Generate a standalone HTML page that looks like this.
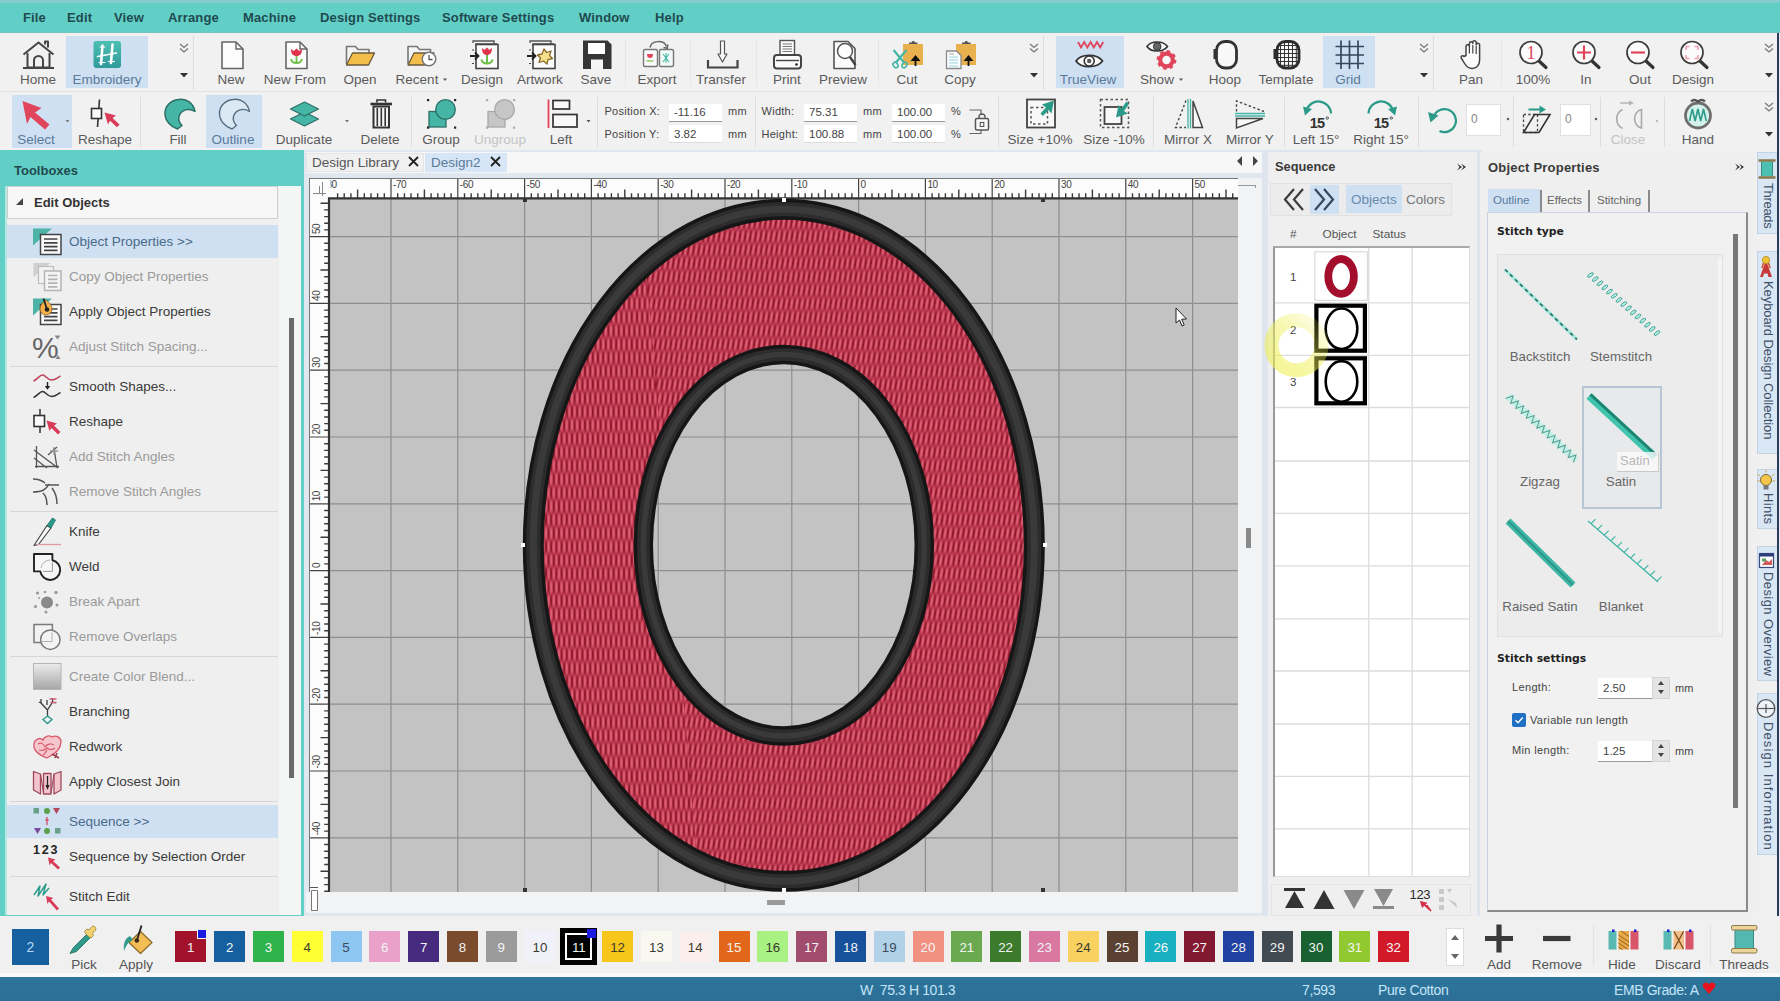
<!DOCTYPE html><html><head><meta charset="utf-8"><title>Embroidery</title><style>
*{box-sizing:border-box;margin:0;padding:0}
html,body{width:1780px;height:1001px;overflow:hidden;background:#f0f0f0;font-family:"Liberation Sans",sans-serif;}
.a{position:absolute}
.t{position:absolute;white-space:nowrap;line-height:1;}
.c{transform:translateX(-50%);}
.lbl{font-size:13.5px;color:#5a5a5a;top:72.8px;}
.lbl2{font-size:13.5px;color:#5a5a5a;top:132.500px;}
.menu{font-size:13px;font-weight:bold;color:#1f4a4f;top:11px;letter-spacing:.15px}
.hl{background:#cfe0f3;}
.sep{position:absolute;width:1px;background:#dcdcdc;}
.fld{position:absolute;background:#fff;border-bottom:1px solid #9a9a9a;font-size:11.5px;color:#444;padding:3.5px 0 0 5px;line-height:1}
.sm{font-size:11px;color:#444;letter-spacing:.28px}
.tb{font-size:13.5px;color:#3a3a3a;}
.tbd{font-size:13.5px;color:#9a9a9a;}
svg{position:absolute;overflow:visible}
</style></head><body>
<div class="a" style="left:0;top:0;width:1780px;height:33px;background:#62cfc6;border-top:3px solid #86cbcd;border-bottom:1.5px solid #74c2ba"></div>
<div class="t menu" style="left:23px">File</div>
<div class="t menu" style="left:67px">Edit</div>
<div class="t menu" style="left:114px">View</div>
<div class="t menu" style="left:168px">Arrange</div>
<div class="t menu" style="left:243px">Machine</div>
<div class="t menu" style="left:320px">Design Settings</div>
<div class="t menu" style="left:442px">Software Settings</div>
<div class="t menu" style="left:579px">Window</div>
<div class="t menu" style="left:655px">Help</div>
<div class="a" style="left:0;top:33px;width:1780px;height:59px;background:#f1f1f1;border-bottom:1px solid #e2e2e2"></div>
<div class="a" style="left:0;top:92px;width:1780px;height:58px;background:#f1f1f1;"></div>
<div class="a hl" style="left:66px;top:36px;width:82px;height:52px"></div>
<div class="a hl" style="left:1056px;top:36px;width:68px;height:52px"></div>
<div class="a hl" style="left:1323px;top:36px;width:52px;height:52px"></div>
<div class="a hl" style="left:12px;top:95px;width:60px;height:53px"></div>
<div class="a hl" style="left:206px;top:95px;width:56px;height:53px"></div>
<div class="sep" style="left:193px;top:36px;height:54px"></div>
<div class="sep" style="left:1043px;top:36px;height:54px"></div>
<div class="sep" style="left:1433px;top:36px;height:54px"></div>
<div class="sep" style="left:140px;top:97px;height:50px"></div>
<div class="sep" style="left:411px;top:97px;height:50px"></div>
<div class="sep" style="left:597px;top:97px;height:50px"></div>
<div class="sep" style="left:755px;top:97px;height:50px"></div>
<div class="sep" style="left:998px;top:97px;height:50px"></div>
<div class="sep" style="left:1153px;top:97px;height:50px"></div>
<div class="sep" style="left:1284px;top:97px;height:50px"></div>
<div class="sep" style="left:1418px;top:97px;height:50px"></div>
<div class="sep" style="left:1513px;top:97px;height:50px"></div>
<div class="sep" style="left:1600px;top:97px;height:50px"></div>
<div class="sep" style="left:1664px;top:97px;height:50px"></div>
<div class="sep" style="left:625px;top:40px;height:46px;background:#e6e6e6"></div>
<div class="sep" style="left:690px;top:40px;height:46px;background:#e6e6e6"></div>
<div class="sep" style="left:756px;top:40px;height:46px;background:#e6e6e6"></div>
<div class="sep" style="left:878px;top:40px;height:46px;background:#e6e6e6"></div>
<div class="sep" style="left:1501px;top:40px;height:46px;background:#e6e6e6"></div>
<div class="t c lbl" style="left:38px">Home</div>
<div class="t c lbl" style="left:107px;color:#5a7a9a">Embroidery</div>
<div class="t c lbl" style="left:231px">New</div>
<div class="t c lbl" style="left:295px">New From</div>
<div class="t c lbl" style="left:360px">Open</div>
<div class="t c lbl" style="left:417px">Recent</div>
<div class="t c lbl" style="left:482px">Design</div>
<div class="t c lbl" style="left:540px">Artwork</div>
<div class="t c lbl" style="left:596px">Save</div>
<div class="t c lbl" style="left:657px">Export</div>
<div class="t c lbl" style="left:721px">Transfer</div>
<div class="t c lbl" style="left:787px">Print</div>
<div class="t c lbl" style="left:843px">Preview</div>
<div class="t c lbl" style="left:907px">Cut</div>
<div class="t c lbl" style="left:960px">Copy</div>
<div class="t c lbl" style="left:1088px;color:#5a7a9a">TrueView</div>
<div class="t c lbl" style="left:1157px">Show</div>
<div class="t c lbl" style="left:1225px">Hoop</div>
<div class="t c lbl" style="left:1286px">Template</div>
<div class="t c lbl" style="left:1348px;color:#5a7a9a">Grid</div>
<div class="t c lbl" style="left:1471px">Pan</div>
<div class="t c lbl" style="left:1533px">100%</div>
<div class="t c lbl" style="left:1586px">In</div>
<div class="t c lbl" style="left:1640px">Out</div>
<div class="t c lbl" style="left:1693px">Design</div>
<div class="t c lbl2" style="left:36px;color:#5a7a9a">Select</div>
<div class="t c lbl2" style="left:105px">Reshape</div>
<div class="t c lbl2" style="left:178px">Fill</div>
<div class="t c lbl2" style="left:233px;color:#5a7a9a">Outline</div>
<div class="t c lbl2" style="left:304px">Duplicate</div>
<div class="t c lbl2" style="left:380px">Delete</div>
<div class="t c lbl2" style="left:441px">Group</div>
<div class="t c lbl2" style="left:500px;color:#c4c4c4">Ungroup</div>
<div class="t c lbl2" style="left:561px">Left</div>
<div class="t c lbl2" style="left:1040px">Size +10%</div>
<div class="t c lbl2" style="left:1114px">Size -10%</div>
<div class="t c lbl2" style="left:1188px">Mirror X</div>
<div class="t c lbl2" style="left:1250px">Mirror Y</div>
<div class="t c lbl2" style="left:1316px">Left 15°</div>
<div class="t c lbl2" style="left:1381px">Right 15°</div>
<div class="t c lbl2" style="left:1628px;color:#c4c4c4">Close</div>
<div class="t c lbl2" style="left:1698px">Hand</div>
<div class="t sm" style="left:604.5px;top:105.5px">Position X:</div>
<div class="t sm" style="left:604.5px;top:128.5px">Position Y:</div>
<div class="fld" style="left:669px;top:103.5px;width:53px;height:18.5px">-11.16</div>
<div class="fld" style="left:669px;top:125px;width:53px;height:17.5px;border-bottom-color:#dcdcdc">3.82</div>
<div class="t sm" style="left:728px;top:106px">mm</div><div class="t sm" style="left:728px;top:129px">mm</div>
<div class="t sm" style="left:761.5px;top:105.5px">Width:</div><div class="t sm" style="left:761.5px;top:128.5px">Height:</div>
<div class="fld" style="left:804px;top:103.5px;width:53px;height:18.5px">75.31</div>
<div class="fld" style="left:804px;top:125px;width:53px;height:17.5px;border-bottom-color:#dcdcdc">100.88</div>
<div class="t sm" style="left:863px;top:106px">mm</div><div class="t sm" style="left:863px;top:129px">mm</div>
<div class="fld" style="left:892px;top:103.5px;width:53px;height:18.5px">100.00</div>
<div class="fld" style="left:892px;top:125px;width:53px;height:17.5px;border-bottom-color:#dcdcdc">100.00</div>
<div class="t sm" style="left:951px;top:106px">%</div><div class="t sm" style="left:951px;top:129px">%</div>
<div class="fld" style="left:1466px;top:104px;width:35px;height:32px;border:1px solid #e0e0e0;color:#888;padding:8px 0 0 4px;font-size:12px">0</div>
<div class="fld" style="left:1560px;top:104px;width:31px;height:32px;border:1px solid #e0e0e0;color:#888;padding:8px 0 0 4px;font-size:12px">0</div>
<svg style="left:0;top:0" width="1780" height="160" viewBox="0 0 1780 160">
<g fill="none" stroke="#444" stroke-width="2" stroke-linejoin="round"><path d="M23.5 54.5L38.5 42.5L53.5 54.5"/><path d="M27.5 53v14.5h22V53"/><path d="M34 67.5v-7a4.5 4.5 0 0 1 9 0v7"/><path d="M45 44.5v-3h3v6"/><path d="M23 68h31"/></g>
<defs><linearGradient id="eg" x1="0" y1="0" x2="0" y2="1"><stop offset="0" stop-color="#4cc0b2"/><stop offset="1" stop-color="#2f9a9c"/></linearGradient></defs>
<rect x="93.5" y="41" width="27.5" height="27" rx="3" fill="url(#eg)"/>
<g stroke="#fff" fill="none" stroke-linecap="round"><path d="M102.5 45.5L101 64" stroke-width="2.6"/><path d="M112.5 44.5L111 63" stroke-width="2.6"/><path d="M97.5 56.5L116.5 53" stroke-width="1.6"/><path d="M99 62.5h6M108.5 61.5h6M100 47h5" stroke-width="1"/></g>
<path d="M180 44l4 3.5 4-3.5 M180 48.5l4 3.5 4-3.5" fill="none" stroke="#777" stroke-width="1.3"/><path d="M180 73h8l-4 4.5z" fill="#333"/>
<path d="M222 42h14l7 7v19.5h-21z" fill="#fcfcfc" stroke="#666" stroke-width="1.6" stroke-linejoin="round"/><path d="M236 42v7h7" fill="none" stroke="#666" stroke-width="1.4"/>
<path d="M286 42h14l7 7v19.5h-21z" fill="#fcfcfc" stroke="#666" stroke-width="1.6" stroke-linejoin="round"/><path d="M300 42v7h7" fill="none" stroke="#666" stroke-width="1.4"/>
<path d="M291 49c0 5 2 7 5.5 7s5.5-2 5.5-7l-2.8 2-2.7-2.5-2.7 2.5z" fill="#e0344e"/><path d="M296.5 56v8M296.5 63c-3 0-5-1.5-5.5-4M296.5 63c3 0 5-1.5 5.5-4" stroke="#6cc04a" stroke-width="1.8" fill="none"/>
<path d="M346.5 64V46.5h9l2.5 3h11V53" fill="#f4f4f4" stroke="#777" stroke-width="1.6" stroke-linejoin="round"/><path d="M346.5 65l6-12h22l-6 12z" fill="#f3bd4c" stroke="#6a5a3a" stroke-width="1.3" stroke-linejoin="round"/>
<path d="M408 64V46.5h9l2.5 3h11V53" fill="#f4f4f4" stroke="#777" stroke-width="1.6" stroke-linejoin="round"/><path d="M408 65l6-12h20l-6 12z" fill="#f3bd4c" stroke="#6a5a3a" stroke-width="1.3" stroke-linejoin="round"/>
<circle cx="429" cy="59" r="6.8" fill="#fff" stroke="#777" stroke-width="1.5"/><path d="M429 55v4.5h3.5" fill="none" stroke="#555" stroke-width="1.3"/>
<path d="M443 78.5h4l-2 2.5z" fill="#555"/>
<path d="M473 43V41h21v3 M476 46V44h21" fill="none" stroke="#555" stroke-width="1.3"/>
<rect x="476" y="44.5" width="22" height="24" fill="#fbfbfb" stroke="#444" stroke-width="1.6"/>
<path d="M470 56h8M475 52.5l3.5 3.5-3.5 3.5" fill="none" stroke="#222" stroke-width="1.8"/><path d="M473 49.5v1M473 63v1" stroke="#333" stroke-width="1.8"/>
<path d="M482 48c0 5 2 7 5 7s5-2 5-7l-2.5 2-2.5-2.5-2.5 2.5z" fill="#e0344e"/><path d="M487 55v9M487 63.5c-3 0-5-1.5-5.5-4M487 63.5c3 0 5-1.5 5.5-4" stroke="#6cc04a" stroke-width="2" fill="none"/>
<path d="M530 43V41h21v3 M533 46V44h21" fill="none" stroke="#555" stroke-width="1.3"/>
<rect x="533" y="44.5" width="22" height="24" fill="#fbfbfb" stroke="#444" stroke-width="1.6"/>
<path d="M527 56h8M532 52.5l3.5 3.5-3.5 3.5" fill="none" stroke="#222" stroke-width="1.8"/><path d="M530 49.5v1M530 63v1" stroke="#333" stroke-width="1.8"/>
<path d="M544 49l2.5 3.5 4.5-1.5-1.5 4.5 3 3-4.5 1.2-1 4.3-3.5-3-4.5 1.5 1.5-4.5-3-3 4.5-1z" fill="#f6e08c" stroke="#8a6a2a" stroke-width="1.3" stroke-linejoin="round"/>
<path d="M583 40.5h24.5l4 4V69H583z" fill="#363636"/><rect x="588" y="43" width="17" height="11" fill="#fff"/><rect x="591" y="59.5" width="12" height="9.5" fill="#f4f4f4"/>
<rect x="643.5" y="49.5" width="14" height="17" rx="1.5" fill="#fafafa" stroke="#777" stroke-width="1.4"/><rect x="659.5" y="49.5" width="14" height="17" rx="1.5" fill="#f2fbf9" stroke="#777" stroke-width="1.4"/>
<path d="M650 47.5a8.5 7 0 0 1 16.5 -1" fill="none" stroke="#666" stroke-width="1.5"/><path d="M663.5 47.5l3.8 0.8 0.5-4" fill="none" stroke="#666" stroke-width="1.5"/>
<path d="M647 54c0 3 1.2 4 3 4s3-1 3-4" fill="#e0455c"/><path d="M646.5 61h7" stroke="#8cc860" stroke-width="1.5"/><path d="M663 54l6 8M669 54l-6 8M666 53v10" stroke="#45b5a6" stroke-width="1.1"/>
<path d="M708 60v7.5h29.5V60" fill="none" stroke="#444" stroke-width="2.2"/><path d="M720.5 41h4v13h2.5l-4.5 8-4.500-8h2.5z" fill="#fafafa" stroke="#555" stroke-width="1.2" stroke-linejoin="round"/>
<rect x="780" y="40.500" width="14.500" height="15" fill="#fafafa" stroke="#555" stroke-width="1.4"/><path d="M782.500 44h9.500M782.500 46.500h9.500M782.500 49h9.500M782.500 51.500h9.500" stroke="#777" stroke-width="1"/>
<rect x="774" y="55" width="27" height="13.500" rx="3" fill="#fafafa" stroke="#444" stroke-width="2"/><path d="M776 60.500h23" stroke="#444" stroke-width="1.4"/><circle cx="796.500" cy="64.500" r="1.300" fill="#222"/>
<path d="M834 41.500h14l7 7V68.500h-21z" fill="#fcfcfc" stroke="#555" stroke-width="1.6" stroke-linejoin="round"/><circle cx="845" cy="51" r="7.500" fill="#fdfdfd" stroke="#555" stroke-width="1.5"/><path d="M850 57l5.500 8" stroke="#444" stroke-width="2.4"/>
<rect x="903" y="44" width="20" height="21" fill="#e9b04e"/><path d="M909 44v-1.500h2.500a1.800 1.800 0 0 1 3.500 0h2.500v1.500z" fill="#555"/>
<path d="M915.5 66v-8M912.5 60l3-3.500 3 3.500z" stroke="#111" stroke-width="1.800" fill="#111"/>
<rect x="956" y="44" width="20" height="21" fill="#e9b04e"/><path d="M962 44v-1.500h2.500a1.800 1.800 0 0 1 3.500 0h2.500v1.500z" fill="#555"/>
<path d="M968.5 66v-8M965.5 60l3-3.500 3 3.500z" stroke="#111" stroke-width="1.800" fill="#111"/>
<path d="M893.500 50l11 13M906.500 50l-11 13" stroke="#45b5a6" stroke-width="2.200" fill="none"/><ellipse cx="895.500" cy="65" rx="2.200" ry="3" fill="none" stroke="#45b5a6" stroke-width="1.600" transform="rotate(-35 895.500 65)"/><ellipse cx="904.500" cy="65" rx="2.200" ry="3" fill="none" stroke="#45b5a6" stroke-width="1.600" transform="rotate(35 904.500 65)"/>
<path d="M946.500 51h10l4.500 4.500V68.500h-14.500z" fill="#fbfdfe" stroke="#8a8a8a" stroke-width="1.300"/><path d="M949 57h9M949 60h9M949 63h9M949 66h9" stroke="#9ad6e0" stroke-width="1.200"/><path d="M949 54h5" stroke="#aaa" stroke-width="1"/>
<path d="M1030 44l4 3.5 4-3.5 M1030 48.5l4 3.5 4-3.5" fill="none" stroke="#777" stroke-width="1.3"/><path d="M1030 73h8l-4 4.5z" fill="#333"/>
<path d="M1078 42l3 5.500 3.200-5.500 3.200 5.500 3.200-5.500 3.200 5.500 3.200-5.500 3.200 5.500 3-5.500" fill="none" stroke="#e0455c" stroke-width="1.800"/>
<path d="M1076 61c5-7.500 21-7.500 26.500 0c-5.500 7.500-21.500 7.500-26.500 0z" fill="#fafafa" stroke="#333" stroke-width="1.800"/><circle cx="1089.200" cy="61" r="5" fill="none" stroke="#333" stroke-width="1.600"/><circle cx="1089.200" cy="61" r="2.200" fill="#555"/>
<path d="M1147 46.500c4-6 16-6 20.500 0c-4.500 6-16.500 6-20.500 0z" fill="#fafafa" stroke="#333" stroke-width="1.600"/><circle cx="1157.200" cy="46.500" r="3.800" fill="#666" stroke="#333" stroke-width="1"/>
<circle cx="1166.500" cy="60" r="6.300" fill="#f6f6f6" stroke="#e0455c" stroke-width="4.200"/><circle cx="1166.500" cy="60" r="8.600" fill="none" stroke="#e0455c" stroke-width="2.600" stroke-dasharray="3.400 3.350"/>
<path d="M1179 78.500h4l-2 2.500z" fill="#555"/>
<rect x="1216.500" y="41.500" width="20" height="26.500" rx="8.500" fill="#f8f8f8" stroke="#333" stroke-width="2.800"/><rect x="1213.500" y="49" width="2.500" height="10" fill="#333"/>
<clipPath id="tc"><rect x="1277" y="41.500" width="22" height="26.500" rx="8.500"/></clipPath>
<rect x="1277" y="41.500" width="22" height="26.500" rx="8.500" fill="#f8f8f8"/><path clip-path="url(#tc)" d="M1280.500 40v30M1284.500 40v30M1288.500 40v30M1292.500 40v30M1296.300 40v30M1276 45.500h24M1276 49.500h24M1276 53.500h24M1276 57.500h24M1276 61.500h24M1276 65.300h24" stroke="#333" stroke-width="1"/>
<rect x="1277" y="41.500" width="22" height="26.500" rx="8.500" fill="none" stroke="#2c2c2c" stroke-width="2.800"/><rect x="1273.500" y="49" width="3" height="10" fill="#2c2c2c"/>
<path d="M1341 40.500v28.500M1349.500 40.500v28.500M1358 40.500v28.500M1335.500 46.500h28.500M1335.500 55h28.500M1335.500 63.500h28.500" stroke="#34495e" stroke-width="1.700" fill="none"/>
<path d="M1420 44l4 3.5 4-3.5 M1420 48.5l4 3.5 4-3.5" fill="none" stroke="#777" stroke-width="1.3"/><path d="M1420 73h8l-4 4.5z" fill="#333"/>
<path d="M1466 55.500v-9a1.700 1.700 0 0 1 3.400 0v-3a1.700 1.700 0 0 1 3.400 0v-1a1.700 1.700 0 0 1 3.400 0v2.500a1.700 1.700 0 0 1 3.400 0V60c0 5-3 8.500-7.500 8.500c-4 0-5.500-1.500-7.500-5l-3.300-5.500c-1-1.800 1.500-3.200 2.700-1.500z" fill="#fcfcfc" stroke="#444" stroke-width="1.500" stroke-linejoin="round"/><path d="M1469.400 46.500v7M1472.800 45v8.500M1476.200 46v8" stroke="#444" stroke-width="1.200"/>
<path d="M1539 61.0L1546 67.5" stroke="#333" stroke-width="3.2" stroke-linecap="round"/><circle cx="1531" cy="52.5" r="11" fill="#fbfbfb" stroke="#3c3c3c" stroke-width="1.7"/><text x="1531" y="59" text-anchor="middle" font-size="18" font-family="Liberation Serif, serif" fill="#e0455c">1</text>
<path d="M1592 61.0L1599 67.5" stroke="#333" stroke-width="3.2" stroke-linecap="round"/><circle cx="1584" cy="52.5" r="11" fill="#fbfbfb" stroke="#3c3c3c" stroke-width="1.7"/><path d="M1577 52.500h14M1584 45.500v14" stroke="#e0455c" stroke-width="2.200"/>
<path d="M1646 61.0L1653 67.5" stroke="#333" stroke-width="3.2" stroke-linecap="round"/><circle cx="1638" cy="52.5" r="11" fill="#fbfbfb" stroke="#3c3c3c" stroke-width="1.7"/><path d="M1631 52.500h14" stroke="#e0455c" stroke-width="2.200"/>
<path d="M1700 61.0L1707 67.5" stroke="#333" stroke-width="3.2" stroke-linecap="round"/><circle cx="1692" cy="52.5" r="11" fill="#fbfbfb" stroke="#3c3c3c" stroke-width="1.7"/><path d="M1686 50v-3.500h3.500M1694.500 46.500h3.500v3.500M1698 55v3.500h-3.500M1689.500 58.500h-3.500v-3.500" stroke="#f0a0ac" stroke-width="1.600" fill="none"/>
<path d="M1765 44l4 3.5 4-3.5 M1765 48.5l4 3.5 4-3.5" fill="none" stroke="#777" stroke-width="1.3"/><path d="M1765 73h8l-4 4.5z" fill="#333"/>
<path d="M22.500 101l19 7-6.500 4.500 14.500 12-4.500 5-14.500-12.500-3.500 7z" fill="#e0455c"/>
<path d="M65.500 120h4l-2 2.500z" fill="#777"/>
<path d="M99.500 99.500L97.500 127" stroke="#333" stroke-width="1.600"/><rect x="91.500" y="108.500" width="10" height="10" fill="#fafafa" stroke="#333" stroke-width="1.600"/>
<path d="M104.500 112.500l11.500 3-3.500 2.500 7 6.500-2.500 2.800-7-6.500-2 3.700z" fill="#d83c58"/>
<path d="M178.5 99.5c8-1.500 15 4 16.500 12c-6-4-14-2-16 5c-0.800 3.500 0.500 6.500 3 9l-4.500 3.500c-6.500-2-12.500-8-12.500-15.500c0-7.500 5.500-13 13.500-14z" fill="#45b5a6" stroke="#2c6f66" stroke-width="1.500" stroke-linejoin="round"/>
<path d="M233 99.5c8-1.500 15 4 16.500 12c-6-4-14-2-16 5c-0.800 3.500 0.500 6.500 3 9l-4.500 3.500c-6.500-2-12.500-8-12.500-15.500c0-7.500 5.500-13 13.500-14z" fill="#dbe9f5" stroke="#566f80" stroke-width="1.400" stroke-linejoin="round"/>
<path d="M304.500 112l14 7-14 7-14-7z" fill="#45b5a6" stroke="#2c6f66" stroke-width="1.200" stroke-linejoin="round"/><path d="M304.500 102l14 7-14 7-14-7z" fill="#45b5a6" stroke="#2c6f66" stroke-width="1.200" stroke-linejoin="round"/>
<path d="M345 120h4l-2 2.500z" fill="#777"/>
<path d="M373.500 106.500h15.500v21h-15.500z" fill="#f4f4f4" stroke="#333" stroke-width="2"/><path d="M377.300 108v18M381.300 108v18M385.200 108v18" stroke="#333" stroke-width="1.600"/><path d="M370.500 104h21.500" stroke="#333" stroke-width="2.600"/><path d="M377 102.500v-2.500h8.500v2.500" fill="none" stroke="#333" stroke-width="1.600"/>
<rect x="429" y="111.500" width="17" height="15.500" fill="#45b5a6" stroke="#2c6f66" stroke-width="1.300"/><circle cx="445.5" cy="109.500" r="9.800" fill="#45b5a6" stroke="#2c6f66" stroke-width="1.300"/>
<rect x="427" y="99" width="2.200" height="2.200" fill="#222"/>
<rect x="454" y="99" width="2.200" height="2.200" fill="#222"/>
<rect x="427" y="126.5" width="2.200" height="2.200" fill="#222"/>
<rect x="454" y="126.5" width="2.200" height="2.200" fill="#222"/>
<rect x="488" y="111.500" width="17" height="15.500" fill="#c6c6c6" stroke="#a8a8a8" stroke-width="1.300"/><circle cx="504.5" cy="109.500" r="9.800" fill="#c6c6c6" stroke="#a8a8a8" stroke-width="1.300"/>
<rect x="486" y="99" width="2.200" height="2.200" fill="#aaa"/>
<rect x="513" y="99" width="2.200" height="2.200" fill="#aaa"/>
<rect x="486" y="126.5" width="2.200" height="2.200" fill="#aaa"/>
<rect x="513" y="126.5" width="2.200" height="2.200" fill="#aaa"/>
<path d="M548.500 99.500v28.500" stroke="#e0455c" stroke-width="1.800"/><rect x="553" y="100.500" width="16.500" height="8.500" fill="#f8f8f8" stroke="#333" stroke-width="1.700"/><rect x="553" y="114.500" width="24" height="12.500" fill="#f8f8f8" stroke="#333" stroke-width="1.700"/>
<path d="M586.500 120h4l-2 2.500z" fill="#555"/>
<path d="M969.500 110h11.500v5M969.500 133.500h11.500v-3" fill="none" stroke="#666" stroke-width="1.200"/><rect x="975.500" y="118.500" width="13" height="11.500" rx="1.500" fill="#fafafa" stroke="#555" stroke-width="1.500"/><path d="M979 118.500v-1.500a3 3 0 0 1 6 0v1.500" fill="none" stroke="#555" stroke-width="1.300"/><rect x="980.200" y="122.500" width="3.600" height="4" fill="none" stroke="#555" stroke-width="1.100"/>
<rect x="1027" y="99.500" width="28" height="28" fill="#f8f8f8" stroke="#444" stroke-width="1.800"/><rect x="1031" y="107.500" width="16.500" height="16.500" fill="none" stroke="#555" stroke-width="1.500" stroke-dasharray="2.500 2.500"/>
<path d="M1054 100.500l-2.500 13-3-3.500-5.500 6-2.500-2.500 5.500-6-4-3z" fill="#2c9a88"/>
<rect x="1100.500" y="99.500" width="28" height="28" fill="none" stroke="#555" stroke-width="1.500" stroke-dasharray="2.500 2.500"/><rect x="1104.500" y="107" width="17" height="17" fill="#f8f8f8" stroke="#444" stroke-width="1.800"/>
<path d="M1116 117.500l2.500-12.500 3 3.500 5-7 2.500 2.500-5 7 4 2.500z" fill="#2c9a88"/>
<path d="M1186 100.500l-10.500 27h10.500" fill="none" stroke="#444" stroke-width="1.400" stroke-dasharray="2.500 2.200"/><path d="M1188 99v29.500M1190.500 99v29.500" stroke="#45b5a6" stroke-width="1.300"/><path d="M1193 101l9.500 26.500h-9.500z" fill="#f8f8f8" stroke="#444" stroke-width="1.500"/>
<path d="M1236.500 111.500v-10.500l27.500 10.500" fill="none" stroke="#444" stroke-width="1.400" stroke-dasharray="2.500 2.200"/><path d="M1235 113.500h30M1235 116h30" stroke="#45b5a6" stroke-width="1.300"/><path d="M1236.500 118.500h26.500l-26.500 9.500z" fill="#f8f8f8" stroke="#444" stroke-width="1.500"/>
<path d="M1331 113.500a12.500 12.500 0 0 0 -24.500 -3" fill="none" stroke="#2c9a88" stroke-width="2.200"/><path d="M1303 106.500l9 2.500-7 6.500z" fill="#2c9a88"/>
<path d="M1368.500 113.500a12.500 12.500 0 0 1 24.500 -3" fill="none" stroke="#2c9a88" stroke-width="2.200"/><path d="M1397 106.500l-9 2.500 7 6.500z" fill="#2c9a88"/>
<text x="1317" y="128" text-anchor="middle" font-size="14.500" font-weight="bold" font-family="Liberation Sans, sans-serif" fill="#333" letter-spacing="-0.800">15</text><circle cx="1327.3" cy="118" r="1.200" fill="none" stroke="#333" stroke-width="0.800"/>
<text x="1381" y="128" text-anchor="middle" font-size="14.500" font-weight="bold" font-family="Liberation Sans, sans-serif" fill="#333" letter-spacing="-0.800">15</text><circle cx="1391.3" cy="118" r="1.200" fill="none" stroke="#333" stroke-width="0.800"/>
<path d="M1433.500 117a11.500 11.500 0 1 1 6 14" fill="none" stroke="#2c9a88" stroke-width="2.200"/><path d="M1428 112l10.500 3.500-8 7z" fill="#2c9a88"/>
<circle cx="1508" cy="119" r="1.300" fill="#666"/><circle cx="1596" cy="119" r="1.300" fill="#666"/>
<path d="M1528.500 109.500h13" stroke="#2c9a88" stroke-width="2"/><path d="M1539.500 105.500l6.500 4-6.500 4z" fill="#2c9a88"/><path d="M1523.500 114.500h14v18h-14z" fill="none" stroke="#444" stroke-width="1.300" stroke-dasharray="2.500 2.200"/><path d="M1534.500 114.500h15.500l-11 18h-15.500z" fill="none" stroke="#333" stroke-width="1.600"/>
<path d="M1622.500 109.500a10 10.500 0 0 0 0 19" fill="none" stroke="#aaa" stroke-width="1.600"/><path d="M1641.500 109.500v18.500a9 9.500 0 0 1 0-18.500z" fill="#f0f0f0" stroke="#aaa" stroke-width="1.600"/><path d="M1620 103h10" stroke="#b4b4b4" stroke-width="1.500"/><path d="M1629 100.500l5 2.500-5 2.500z" fill="#b4b4b4"/><circle cx="1657" cy="121" r="1.200" fill="#bbb"/>
<circle cx="1698" cy="115.500" r="12.500" fill="#d4f2ec" stroke="#6f6f6f" stroke-width="2.800"/><path d="M1689.500 121l2.800-12 2.800 12 2.800-12 2.800 12 2.800-12 2.800 12" fill="none" stroke="#2c9a88" stroke-width="1.600"/><path d="M1691 101.500c2-2 5-1.500 7 0c2-1.500 5-2 7 0" fill="none" stroke="#555" stroke-width="2.200"/>
<path d="M1765 103l4 3.5 4-3.5 M1765 107.5l4 3.5 4-3.5" fill="none" stroke="#777" stroke-width="1.3"/><path d="M1765 132h8l-4 4.5z" fill="#333"/>
</svg>
<div class="a" style="left:0;top:150px;width:304px;height:767.5px;background:#62cfc6"></div>
<div class="t" style="left:14px;top:164px;font-size:13px;font-weight:bold;color:#1f4a4f">Toolboxes</div>
<div class="a" style="left:5px;top:186px;width:296px;height:728.5px;background:#f4f6f6"></div>
<div class="a" style="left:5px;top:186px;width:2px;height:728.5px;background:#b4e8e2"></div>
<div class="a" style="left:7px;top:186px;width:272px;height:728.5px;background:#efefef"></div>
<div class="a" style="left:7px;top:186px;width:271px;height:33px;background:#f7f7f7;border:1px solid #cfcfcf"></div>
<div class="t" style="left:34px;top:196px;font-size:13px;font-weight:bold;color:#333">Edit Objects</div>
<svg style="left:15px;top:197px" width="10" height="10"><path d="M1 8 L8 8 L8 1 Z" fill="#444"/></svg>
<div class="a hl" style="left:7px;top:225px;width:271px;height:33px"></div>
<div class="a hl" style="left:7px;top:805px;width:271px;height:33px"></div>
<div class="t tb" style="left:69px;top:235px;color:#4a6a8a">Object Properties &gt;&gt;</div>
<div class="t tbd" style="left:69px;top:270px">Copy Object Properties</div>
<div class="t tb" style="left:69px;top:305px">Apply Object Properties</div>
<div class="t tbd" style="left:69px;top:340px">Adjust Stitch Spacing...</div>
<div class="t tb" style="left:69px;top:380px">Smooth Shapes...</div>
<div class="t tb" style="left:69px;top:415px">Reshape</div>
<div class="t tbd" style="left:69px;top:450px">Add Stitch Angles</div>
<div class="t tbd" style="left:69px;top:485px">Remove Stitch Angles</div>
<div class="t tb" style="left:69px;top:525px">Knife</div>
<div class="t tb" style="left:69px;top:560px">Weld</div>
<div class="t tbd" style="left:69px;top:595px">Break Apart</div>
<div class="t tbd" style="left:69px;top:630px">Remove Overlaps</div>
<div class="t tbd" style="left:69px;top:670px">Create Color Blend...</div>
<div class="t tb" style="left:69px;top:705px">Branching</div>
<div class="t tb" style="left:69px;top:740px">Redwork</div>
<div class="t tb" style="left:69px;top:775px">Apply Closest Join</div>
<div class="t tb" style="left:69px;top:815px;color:#4a6a8a">Sequence &gt;&gt;</div>
<div class="t tb" style="left:69px;top:850px">Sequence by Selection Order</div>
<div class="t tb" style="left:69px;top:890px">Stitch Edit</div>
<div class="a" style="left:10px;top:366px;width:268px;height:1px;background:#d6d6d6"></div>
<div class="a" style="left:10px;top:511px;width:268px;height:1px;background:#d6d6d6"></div>
<div class="a" style="left:10px;top:656px;width:268px;height:1px;background:#d6d6d6"></div>
<div class="a" style="left:10px;top:801px;width:268px;height:1px;background:#d6d6d6"></div>
<div class="a" style="left:10px;top:876px;width:268px;height:1px;background:#d6d6d6"></div>
<div class="a" style="left:289px;top:318px;width:5px;height:460px;background:#6a6a6a"></div>
<svg style="left:0;top:0" width="320" height="1001" viewBox="0 0 320 1001">
<path d="M33.0 228.5h19l-19 17z" fill="#4db3a6"/><rect x="40.5" y="234.5" width="20.500" height="20" fill="#fafafa" stroke="#444" stroke-width="1.500"/><path d="M44.0 239.0h13.500M44.0 242.8h13.500M44.0 246.6h13.500M44.0 250.4h13.500" stroke="#444" stroke-width="1.700"/>
<path d="M33.500 263h17l-17 14z" fill="#cfcfcf"/><rect x="38.500" y="266.500" width="15" height="17" fill="#f2f2f2" stroke="#bdbdbd" stroke-width="1.200"/>
<rect x="44.5" y="271" width="16.500" height="19.500" fill="#f4f4f4" stroke="#b4b4b4" stroke-width="1.500"/><path d="M48.0 275.5h9.500M48.0 279.3h9.500M48.0 283.1h9.500M48.0 286.9h9.500" stroke="#b4b4b4" stroke-width="1.700"/>
<path d="M33.0 298.5h19l-19 17z" fill="#4db3a6"/><rect x="40.5" y="304.5" width="20.500" height="20" fill="#fafafa" stroke="#444" stroke-width="1.500"/><path d="M44.0 309.0h13.500M44.0 312.8h13.500M44.0 316.6h13.500M44.0 320.4h13.500" stroke="#444" stroke-width="1.700"/>
<path d="M46 300c-4 3-6 6-6 9a6 6 0 0 0 12 0c0-3-2-6-6-9z" fill="#f5b04a" stroke="#8a5a1a" stroke-width="0.800"/><path d="M43.500 298.500l3.500 11" stroke="#222" stroke-width="1.800"/><circle cx="47" cy="309.500" r="2.300" fill="#222"/>
<text x="32" y="358" font-size="30" font-family="Liberation Sans, sans-serif" fill="#666">%</text><path d="M54.500 335.500h6l-3 4z M55.500 359h5l-2.500-4z" fill="#8a8a8a"/><circle cx="55.500" cy="357" r="0" fill="#666"/>
<path d="M33.500 381c4-1.500 6-6 9-6s5 5 9 5s6-2.500 9-4" fill="none" stroke="#c0405a" stroke-width="1.500"/><path d="M33.500 397.500c4-1.500 6-6 9-6s5 5 9 5s6-2.500 9-4" fill="none" stroke="#333" stroke-width="1.500"/><path d="M47.500 382v4" stroke="#222" stroke-width="1.400"/><path d="M44.800 386h5.400l-2.700 3.800z" fill="#222"/>
<path d="M40 409v6M40 427v6" stroke="#333" stroke-width="1.500"/><rect x="34" y="415.500" width="10.500" height="11" fill="#fafafa" stroke="#333" stroke-width="1.600"/><path d="M46.500 420.500l10.500 3-3 2 6.500 6.500-2.500 2.500-6.500-6.500-2 3z" fill="#d83c58"/>
<g stroke="#555" stroke-width="1.300" fill="none"><path d="M36.500 446v22M34 450l24 18M34 458l13 10M35 466.500h24M54 448l3 20M48 455l9-8"/><path d="M50 451h8M54 447v8" stroke="#999"/></g>
<g stroke="#555" stroke-width="1.500" fill="none"><path d="M33 479c5 0 9 1.500 12 4M33 492c9 0 13-2 16-8M45 485h14M43 493c3 3 4 8 4 12M52 488c3 4 5 9 5 16"/></g>
<path d="M34 545.500l13-20 4 2.500-12.500 16.500z" fill="#fafafa" stroke="#444" stroke-width="1.200" stroke-linejoin="round"/><path d="M47 525.500l5.500-7.500 3 2-4.500 8z" fill="#2a9a8a" stroke="#1a6a60" stroke-width="0.800"/><path d="M37 544.500h24" stroke="#e09aa4" stroke-width="1.300"/>
<path d="M34 554H52.400V560.200A10 10 0 1 1 40.300 571.400H34Z" fill="#f6f6f6" stroke="#222" stroke-width="1.900" stroke-linejoin="round"/><path d="M43 571.400h9.400v-9" fill="none" stroke="#999" stroke-width="1"/><path d="M41 568a9.500 9.500 0 0 1 9-8" fill="none" stroke="#aaa" stroke-width="0.900"/>
<circle cx="47" cy="602.500" r="6" fill="#8a8a8a"/><g fill="#9a9a9a"><circle cx="37.500" cy="593" r="1.600"/><circle cx="45" cy="592" r="1.300"/><circle cx="56" cy="592.500" r="1.700"/><circle cx="35.500" cy="606.500" r="1.600"/><circle cx="57" cy="605" r="1.500"/><circle cx="46" cy="612" r="1.500"/><circle cx="39" cy="598" r="1"/></g>
<path d="M34 624.500h18.400v18h-18.400z" fill="#f2f2f2" stroke="#7a7a7a" stroke-width="1.500"/><circle cx="50.300" cy="639.700" r="9.700" fill="#f4f4f4" stroke="#7a7a7a" stroke-width="1.500"/><path d="M41 641.500h11v-9" fill="none" stroke="#aaa" stroke-width="0.900"/>
<defs><linearGradient id="cb" x1="0" y1="0" x2="0" y2="1"><stop offset="0" stop-color="#ececec"/><stop offset="1" stop-color="#a6a6a6"/></linearGradient></defs><rect x="33.500" y="663.500" width="27.500" height="26" fill="url(#cb)" stroke="#b4b4b4" stroke-width="1"/>
<g fill="none" stroke="#3a3a3a" stroke-width="1.300"><path d="M47.500 716v-6M47.500 710l-6.500-7M47.500 710l5-8v-4M41 703v-4M41 703l-2-1M52.500 702l3 1M47 700v5"/></g><path d="M49.500 699h7M50.500 702.500h6" stroke="#d06078" stroke-width="1.300"/><path d="M47.500 716l-4.500 3.500 4.500 4 4.500-4z" fill="none" stroke="#2a9a8a" stroke-width="1.400"/>
<path d="M47 758c-8-3-14-8-13-14c0.500-5 6-7 9-4c1-4 6-5 9-3c4-2 9 0 9 5c0 6-6 12-14 16z" fill="#f6c6cc" stroke="#d85a6c" stroke-width="1.300"/><path d="M38 744c3-2 6 0 7 3c2-3 6-4 9-2M39 750c3 1 6 0 8-2c2 2 6 2 8 0M43 755c2-1 3-3 4-5" fill="none" stroke="#d85a6c" stroke-width="1.100"/><path d="M52 754l7 4M55 758l2-5" stroke="#a03c4c" stroke-width="1.600"/>
<path d="M33.500 771.500l7 2.500v20l-7-4z M61 771.500l-7 2.500v20l7-4z M43.500 773.500h7.500v20.500h-7.500z" fill="#f2c4cc" stroke="#a04a5c" stroke-width="1.300" stroke-linejoin="round"/><path d="M40.500 774l3 19M54 774l-3 19" stroke="#a04a5c" stroke-width="1.200"/><path d="M47.500 776v10" stroke="#222" stroke-width="1.300"/><path d="M45.500 785h4l-2 5z" fill="#222"/>
<rect x="33.500" y="808" width="5.500" height="5.500" fill="#6aa08a"/><circle cx="47" cy="811" r="3" fill="#5aa04a"/><path d="M53 808h7l-3.500 6z" fill="#b04860"/><path d="M47 817v8" stroke="#d83c58" stroke-width="1.200"/><path d="M45.300 820h3.400" stroke="#d83c58" stroke-width="1.200"/><path d="M34 828h7l-3.500 6z" fill="#7a4a9a"/><circle cx="47" cy="831" r="3" fill="#5aa04a"/><rect x="55" y="828" width="5.500" height="5.500" fill="#6aa08a"/>
<text x="33" y="853.500" font-size="12.500" font-weight="bold" font-family="Liberation Sans, sans-serif" fill="#222" letter-spacing="1.800">123</text><path d="M48 857.500l7.500 2-2.500 1.500 7 6.500-2 2-7-6.500-1.500 2.500z" fill="#d83c58"/>
<path d="M34 895l6-9 -2 10 8-12-3 11 6-7" fill="none" stroke="#2a9a8a" stroke-width="1.400" stroke-linejoin="round"/><path d="M46 896l7.500 2-2.500 1.500 8 9-2 2-8-9-1.500 2.500z" fill="#d83c58"/>
</svg>
<div class="a" style="left:304px;top:150px;width:962px;height:767px;background:#e1e7ee"></div>
<div class="a" style="left:306px;top:152px;width:957px;height:21px;background:#f7f7f8"></div>
<div class="a" style="left:306px;top:153px;width:118px;height:19px;background:#f0f0f0;border:1px solid #e4e4e4"></div>
<div class="a" style="left:425px;top:153px;width:82px;height:19px;background:#d6e6f6;"></div>
<div class="t" style="left:312px;top:156px;font-size:13.5px;color:#555">Design Library</div>
<div class="t" style="left:431px;top:156px;font-size:13.5px;color:#5a7a9a">Design2</div>
<svg style="left:408px;top:156px" width="11" height="11"><path d="M1 1L10 10M10 1L1 10" stroke="#222" stroke-width="1.8"/></svg>
<svg style="left:490px;top:156px" width="11" height="11"><path d="M1 1L10 10M10 1L1 10" stroke="#222" stroke-width="1.8"/></svg>
<svg style="left:1234px;top:155px" width="28" height="12"><path d="M8 1L3 6L8 11Z M19 1L24 6L19 11Z" fill="#444"/></svg>
<div class="a" style="left:309px;top:178px;width:950px;height:21px;background:#fcfcfc;border:1px solid #777;border-right:none;border-bottom:none"></div>
<div class="a" style="left:309px;top:198px;width:21px;height:694px;background:#fcfcfc;border-left:1px solid #777"></div>
<div class="a" style="left:330px;top:199px;width:908px;height:693px;background:#c3c3c3"></div>
<div class="a" style="left:1238px;top:178px;width:24px;height:735px;background:#f2f3f5"></div>
<div class="a" style="left:306px;top:892px;width:956px;height:21px;background:#f2f3f5"></div>
<div class="a" style="left:1246px;top:528px;width:5px;height:20px;background:#8a8a8a"></div>
<div class="a" style="left:767px;top:900px;width:18px;height:5px;background:#9a9a9a"></div>
<div class="a" style="left:1238px;top:185px;width:18px;height:3px;border:1px solid #999;border-bottom:none;border-left:none"></div>
<svg style="left:0;top:0" width="1780" height="1001" viewBox="0 0 1780 1001">
<defs>
<pattern id="st" width="5.2" height="27" patternUnits="userSpaceOnUse">
<rect width="5.2" height="27" fill="#b4334a"/>
<ellipse cx="0" cy="6.75" rx="0.85" ry="5.9" fill="#8c1626"/><ellipse cx="5.2" cy="6.75" rx="0.85" ry="5.9" fill="#8c1626"/><ellipse cx="2.6" cy="6.75" rx="1.7" ry="6.9" fill="#c6445b"/><ellipse cx="2.6" cy="6.75" rx="0.85" ry="5.2" fill="#de5f75"/>
<ellipse cx="2.6" cy="20.25" rx="0.85" ry="5.9" fill="#8c1626"/><ellipse cx="0" cy="20.25" rx="1.7" ry="6.9" fill="#c6445b"/><ellipse cx="0" cy="20.25" rx="0.85" ry="5.2" fill="#de5f75"/><ellipse cx="5.2" cy="20.25" rx="1.7" ry="6.9" fill="#c6445b"/><ellipse cx="5.2" cy="20.25" rx="0.85" ry="5.2" fill="#de5f75"/>
</pattern>
<pattern id="st2" patternTransform="skewX(-9)" width="5.2" height="27" patternUnits="userSpaceOnUse">
<rect width="5.2" height="27" fill="#b4334a"/>
<ellipse cx="0" cy="6.75" rx="0.85" ry="5.9" fill="#8c1626"/><ellipse cx="5.2" cy="6.75" rx="0.85" ry="5.9" fill="#8c1626"/><ellipse cx="2.6" cy="6.75" rx="1.7" ry="6.9" fill="#c6445b"/><ellipse cx="2.6" cy="6.75" rx="0.85" ry="5.2" fill="#de5f75"/>
<ellipse cx="2.6" cy="20.25" rx="0.85" ry="5.9" fill="#8c1626"/><ellipse cx="0" cy="20.25" rx="1.7" ry="6.9" fill="#c6445b"/><ellipse cx="0" cy="20.25" rx="0.85" ry="5.2" fill="#de5f75"/><ellipse cx="5.2" cy="20.25" rx="1.7" ry="6.9" fill="#c6445b"/><ellipse cx="5.2" cy="20.25" rx="0.85" ry="5.2" fill="#de5f75"/>
</pattern>
<clipPath id="cl1"><path d="M330 199H640L700 892H330z"/></clipPath><clipPath id="cl2"><path d="M640 199H1238V892H700z"/></clipPath>
<clipPath id="cv"><rect x="330" y="199" width="908" height="693"/></clipPath>
</defs>
<path d="M391.0 199V892 M457.8 199V892 M524.6 199V892 M591.4 199V892 M658.2 199V892 M725.0 199V892 M791.8 199V892 M858.6 199V892 M925.4 199V892 M992.2 199V892 M1059.0 199V892 M1125.8 199V892 M1192.6 199V892 M330 236.6H1238 M330 303.4H1238 M330 370.2H1238 M330 437.0H1238 M330 503.8H1238 M330 570.6H1238 M330 637.4H1238 M330 704.2H1238 M330 771.0H1238 M330 837.8H1238" stroke="#8e8e8e" stroke-width="1.200" fill="none"/>
<path d="M337.6 198v-4.800 M344.2 198v-4.800 M350.9 198v-4.800 M357.6 198v-8.500 M364.3 198v-4.800 M371.0 198v-4.800 M377.6 198v-4.800 M384.3 198v-4.800 M397.7 198v-4.800 M404.4 198v-4.800 M411.0 198v-4.800 M417.7 198v-4.800 M424.4 198v-8.500 M431.1 198v-4.800 M437.8 198v-4.800 M444.4 198v-4.800 M451.1 198v-4.800 M464.5 198v-4.800 M471.2 198v-4.800 M477.8 198v-4.800 M484.5 198v-4.800 M491.2 198v-8.500 M497.9 198v-4.800 M504.6 198v-4.800 M511.2 198v-4.800 M517.9 198v-4.800 M531.3 198v-4.800 M538.0 198v-4.800 M544.6 198v-4.800 M551.3 198v-4.800 M558.0 198v-8.500 M564.7 198v-4.800 M571.4 198v-4.800 M578.0 198v-4.800 M584.7 198v-4.800 M598.1 198v-4.800 M604.8 198v-4.800 M611.4 198v-4.800 M618.1 198v-4.800 M624.8 198v-8.500 M631.5 198v-4.800 M638.2 198v-4.800 M644.8 198v-4.800 M651.5 198v-4.800 M664.9 198v-4.800 M671.6 198v-4.800 M678.2 198v-4.800 M684.9 198v-4.800 M691.6 198v-8.500 M698.3 198v-4.800 M705.0 198v-4.800 M711.6 198v-4.800 M718.3 198v-4.800 M731.7 198v-4.800 M738.4 198v-4.800 M745.0 198v-4.800 M751.7 198v-4.800 M758.4 198v-8.500 M765.1 198v-4.800 M771.8 198v-4.800 M778.4 198v-4.800 M785.1 198v-4.800 M798.5 198v-4.800 M805.2 198v-4.800 M811.8 198v-4.800 M818.5 198v-4.800 M825.2 198v-8.500 M831.9 198v-4.800 M838.6 198v-4.800 M845.2 198v-4.800 M851.9 198v-4.800 M865.3 198v-4.800 M872.0 198v-4.800 M878.6 198v-4.800 M885.3 198v-4.800 M892.0 198v-8.500 M898.7 198v-4.800 M905.4 198v-4.800 M912.0 198v-4.800 M918.7 198v-4.800 M932.1 198v-4.800 M938.8 198v-4.800 M945.4 198v-4.800 M952.1 198v-4.800 M958.8 198v-8.500 M965.5 198v-4.800 M972.2 198v-4.800 M978.8 198v-4.800 M985.5 198v-4.800 M998.9 198v-4.800 M1005.6 198v-4.800 M1012.2 198v-4.800 M1018.9 198v-4.800 M1025.6 198v-8.500 M1032.3 198v-4.800 M1039.0 198v-4.800 M1045.6 198v-4.800 M1052.3 198v-4.800 M1065.7 198v-4.800 M1072.4 198v-4.800 M1079.0 198v-4.800 M1085.7 198v-4.800 M1092.4 198v-8.500 M1099.1 198v-4.800 M1105.8 198v-4.800 M1112.4 198v-4.800 M1119.1 198v-4.800 M1132.5 198v-4.800 M1139.2 198v-4.800 M1145.8 198v-4.800 M1152.5 198v-4.800 M1159.2 198v-8.500 M1165.9 198v-4.800 M1172.6 198v-4.800 M1179.2 198v-4.800 M1185.9 198v-4.800 M1199.3 198v-4.800 M1206.0 198v-4.800 M1212.6 198v-4.800 M1219.3 198v-4.800 M1226.0 198v-8.500 M1232.7 198v-4.800 M329 203.2h-8.500 M329 209.9h-4.800 M329 216.6h-4.800 M329 223.2h-4.800 M329 229.9h-4.800 M329 243.3h-4.800 M329 250.0h-4.800 M329 256.6h-4.800 M329 263.3h-4.800 M329 270.0h-8.500 M329 276.7h-4.800 M329 283.4h-4.800 M329 290.0h-4.800 M329 296.7h-4.800 M329 310.1h-4.800 M329 316.8h-4.800 M329 323.4h-4.800 M329 330.1h-4.800 M329 336.8h-8.500 M329 343.5h-4.800 M329 350.2h-4.800 M329 356.8h-4.800 M329 363.5h-4.800 M329 376.9h-4.800 M329 383.6h-4.800 M329 390.2h-4.800 M329 396.9h-4.800 M329 403.6h-8.500 M329 410.3h-4.800 M329 417.0h-4.800 M329 423.6h-4.800 M329 430.3h-4.800 M329 443.7h-4.800 M329 450.4h-4.800 M329 457.0h-4.800 M329 463.7h-4.800 M329 470.4h-8.500 M329 477.1h-4.800 M329 483.8h-4.800 M329 490.4h-4.800 M329 497.1h-4.800 M329 510.5h-4.800 M329 517.2h-4.800 M329 523.8h-4.800 M329 530.5h-4.800 M329 537.2h-8.500 M329 543.9h-4.800 M329 550.6h-4.800 M329 557.2h-4.800 M329 563.9h-4.800 M329 577.3h-4.800 M329 584.0h-4.800 M329 590.6h-4.800 M329 597.3h-4.800 M329 604.0h-8.500 M329 610.7h-4.800 M329 617.4h-4.800 M329 624.0h-4.800 M329 630.7h-4.800 M329 644.1h-4.800 M329 650.8h-4.800 M329 657.4h-4.800 M329 664.1h-4.800 M329 670.8h-8.500 M329 677.5h-4.800 M329 684.2h-4.800 M329 690.8h-4.800 M329 697.5h-4.800 M329 710.9h-4.800 M329 717.6h-4.800 M329 724.2h-4.800 M329 730.9h-4.800 M329 737.6h-8.500 M329 744.3h-4.800 M329 751.0h-4.800 M329 757.6h-4.800 M329 764.3h-4.800 M329 777.7h-4.800 M329 784.4h-4.800 M329 791.0h-4.800 M329 797.7h-4.800 M329 804.4h-8.500 M329 811.1h-4.800 M329 817.8h-4.800 M329 824.4h-4.800 M329 831.1h-4.800 M329 844.5h-4.800 M329 851.2h-4.800 M329 857.8h-4.800 M329 864.5h-4.800 M329 871.2h-8.500 M329 877.9h-4.800 M329 884.6h-4.800 M329 891.2h-4.800" stroke="#3a3a3a" stroke-width="1.400" fill="none"/>
<path d="M391.0 198V179 M457.8 198V179 M524.6 198V179 M591.4 198V179 M658.2 198V179 M725.0 198V179 M791.8 198V179 M858.6 198V179 M925.4 198V179 M992.2 198V179 M1059.0 198V179 M1125.8 198V179 M1192.6 198V179 M329 236.6H310 M329 303.4H310 M329 370.2H310 M329 437.0H310 M329 503.8H310 M329 570.6H310 M329 637.4H310 M329 704.2H310 M329 771.0H310 M329 837.8H310" stroke="#444" stroke-width="1.200" fill="none"/>
<path d="M329 198.300H1238 M329 197.300V892" stroke="#333" stroke-width="2.200" fill="none"/>
<text x="393.0" y="188" font-size="10" fill="#444" font-family="Liberation Sans, sans-serif" letter-spacing="-0.400">-70</text>
<text x="459.8" y="188" font-size="10" fill="#444" font-family="Liberation Sans, sans-serif" letter-spacing="-0.400">-60</text>
<text x="526.6" y="188" font-size="10" fill="#444" font-family="Liberation Sans, sans-serif" letter-spacing="-0.400">-50</text>
<text x="593.4" y="188" font-size="10" fill="#444" font-family="Liberation Sans, sans-serif" letter-spacing="-0.400">-40</text>
<text x="660.2" y="188" font-size="10" fill="#444" font-family="Liberation Sans, sans-serif" letter-spacing="-0.400">-30</text>
<text x="727.0" y="188" font-size="10" fill="#444" font-family="Liberation Sans, sans-serif" letter-spacing="-0.400">-20</text>
<text x="793.8" y="188" font-size="10" fill="#444" font-family="Liberation Sans, sans-serif" letter-spacing="-0.400">-10</text>
<text x="860.6" y="188" font-size="10" fill="#444" font-family="Liberation Sans, sans-serif" letter-spacing="-0.400">0</text>
<text x="927.4" y="188" font-size="10" fill="#444" font-family="Liberation Sans, sans-serif" letter-spacing="-0.400">10</text>
<text x="994.2" y="188" font-size="10" fill="#444" font-family="Liberation Sans, sans-serif" letter-spacing="-0.400">20</text>
<text x="1061.0" y="188" font-size="10" fill="#444" font-family="Liberation Sans, sans-serif" letter-spacing="-0.400">30</text>
<text x="1127.8" y="188" font-size="10" fill="#444" font-family="Liberation Sans, sans-serif" letter-spacing="-0.400">40</text>
<text x="1194.6" y="188" font-size="10" fill="#444" font-family="Liberation Sans, sans-serif" letter-spacing="-0.400">50</text>
<clipPath id="c80"><rect x="330.500" y="179" width="20" height="12"/></clipPath><text clip-path="url(#c80)" x="323.500" y="188" font-size="10" fill="#444" font-family="Liberation Sans, sans-serif" letter-spacing="-0.400">-80</text>
<text transform="translate(319.500,234.1) rotate(-90)" font-size="10" fill="#444" font-family="Liberation Sans, sans-serif" letter-spacing="-0.400">50</text>
<text transform="translate(319.500,300.9) rotate(-90)" font-size="10" fill="#444" font-family="Liberation Sans, sans-serif" letter-spacing="-0.400">40</text>
<text transform="translate(319.500,367.7) rotate(-90)" font-size="10" fill="#444" font-family="Liberation Sans, sans-serif" letter-spacing="-0.400">30</text>
<text transform="translate(319.500,434.5) rotate(-90)" font-size="10" fill="#444" font-family="Liberation Sans, sans-serif" letter-spacing="-0.400">20</text>
<text transform="translate(319.500,501.3) rotate(-90)" font-size="10" fill="#444" font-family="Liberation Sans, sans-serif" letter-spacing="-0.400">10</text>
<text transform="translate(319.500,568.1) rotate(-90)" font-size="10" fill="#444" font-family="Liberation Sans, sans-serif" letter-spacing="-0.400">0</text>
<text transform="translate(319.500,634.9) rotate(-90)" font-size="10" fill="#444" font-family="Liberation Sans, sans-serif" letter-spacing="-0.400">-10</text>
<text transform="translate(319.500,701.7) rotate(-90)" font-size="10" fill="#444" font-family="Liberation Sans, sans-serif" letter-spacing="-0.400">-20</text>
<text transform="translate(319.500,768.5) rotate(-90)" font-size="10" fill="#444" font-family="Liberation Sans, sans-serif" letter-spacing="-0.400">-30</text>
<text transform="translate(319.500,835.3) rotate(-90)" font-size="10" fill="#444" font-family="Liberation Sans, sans-serif" letter-spacing="-0.400">-40</text>
<path d="M313 193.500h13 M322.500 182v14 M319.500 186v7.500" stroke="#888" stroke-width="1" fill="none"/>
<path d="M311.500 890.500h6v20h-6z" stroke="#777" fill="#fff" stroke-width="1"/><path d="M310 887.500h8" stroke="#555" stroke-width="1"/>
<g clip-path="url(#cv)">
<path fill-rule="evenodd" fill="url(#st)" d="M783.800 209.300a251 336 0 1 0 0.01 0z M783.800 355.300a141 190 0 1 1 -0.01 0z"/>
<g clip-path="url(#cl2)"><path fill-rule="evenodd" fill="url(#st2)" d="M783.800 209.300a251 336 0 1 0 0.01 0z M783.800 355.300a141 190 0 1 1 -0.01 0z"/></g>
<ellipse cx="783.800" cy="545.300" rx="250.5" ry="336" fill="none" stroke="#161616" stroke-width="21"/>
<ellipse cx="783.800" cy="545.300" rx="250.5" ry="336" fill="none" stroke="#2c2c2c" stroke-width="14"/>
<ellipse cx="783.800" cy="545.300" rx="250.5" ry="336" fill="none" stroke="#3a3a3a" stroke-width="7"/>
<ellipse cx="783.800" cy="545.300" rx="140.5" ry="190.75" fill="none" stroke="#161616" stroke-width="19.5"/>
<ellipse cx="783.800" cy="545.300" rx="140.5" ry="190.75" fill="none" stroke="#2c2c2c" stroke-width="12.5"/>
<ellipse cx="783.800" cy="545.300" rx="140.5" ry="190.75" fill="none" stroke="#3a3a3a" stroke-width="5.5"/>
</g>
<rect x="782" y="198" width="4" height="4" fill="#fff"/>
<rect x="521" y="543" width="4" height="4" fill="#fff"/>
<rect x="1043" y="543" width="4" height="4" fill="#fff"/>
<rect x="782" y="888" width="4" height="4" fill="#fff"/>
<rect x="523" y="198" width="4" height="4" fill="#333"/>
<rect x="1041" y="198" width="4" height="4" fill="#333"/>
<rect x="523" y="888" width="4" height="4" fill="#333"/>
<rect x="1041" y="888" width="4" height="4" fill="#333"/>
<path d="M1176 308v15l3.5-3 2.5 6 2.2-1-2.5-5.8 4.8-0.2z" fill="#fff" stroke="#222" stroke-width="1"/>
</svg>
<div class="a" style="left:1262px;top:150px;width:220px;height:770px;background:#dfe5ec"></div>
<div class="a" style="left:1268px;top:152px;width:209px;height:764px;background:#efefef"></div>
<div class="t" style="left:1275px;top:161px;font-size:12.8px;font-weight:bold;color:#3a3a3a">Sequence</div>
<svg style="left:1456px;top:162px" width="11" height="10"><path d="M1 1.5 L6 5 L1 8.5 L3.5 5Z M5 1.5 L10 5 L5 8.5 L7.5 5Z" fill="#333"/></svg>
<div class="a" style="left:1270px;top:183px;width:182px;height:33px;background:#ececec;border:1px solid #e2e2e2"></div>
<div class="a hl" style="left:1310px;top:185px;width:29px;height:29px"></div>
<div class="a hl" style="left:1346px;top:185px;width:56px;height:28px"></div>
<svg style="left:1282px;top:187px" width="60" height="26"><path d="M12 2 L3 12.5 L12 23 M21 2 L12 12.5 L21 23" fill="none" stroke="#3c3c3c" stroke-width="2.2"/><path d="M33 2 L42 12.5 L33 23 M42 2 L51 12.5 L42 23" fill="none" stroke="#34495e" stroke-width="2.2"/></svg>
<div class="t" style="left:1351px;top:193px;font-size:13.5px;color:#6a8aab">Objects</div>
<div class="t" style="left:1406px;top:193px;font-size:13.5px;color:#777">Colors</div>
<div class="t" style="left:1290px;top:228.5px;font-size:11.8px;color:#555">#</div>
<div class="t" style="left:1322.5px;top:228.5px;font-size:11.8px;color:#555">Object</div>
<div class="t" style="left:1372.5px;top:228.5px;font-size:11.8px;color:#555">Status</div>
<div class="a" style="left:1273px;top:246px;width:197px;height:631px;background:#fff;border-top:2px solid #aaa;border-left:2px solid #999;border-right:1px solid #ddd;border-bottom:1px solid #ddd"></div>
<div class="a" style="left:1271px;top:884px;width:200px;height:32px;border:1px solid #e4e4e4"></div>
<svg style="left:0;top:0" width="1780" height="1001" viewBox="0 0 1780 1001">
<path d="M1275 302.8H1469 M1275 355.3H1469 M1275 407.5H1469 M1275 461H1469 M1275 513.4H1469 M1275 565.8H1469 M1275 618.8H1469 M1275 671H1469 M1275 724H1469 M1275 776.4H1469 M1275 828.9H1469 M1368.8 248V876 M1412.2 248V876" stroke="#dcdcdc" stroke-width="1.3" fill="none"/>
<text x="1290" y="281" font-size="11.5" fill="#444" font-family="Liberation Sans, sans-serif">1</text>
<text x="1290" y="334" font-size="11.5" fill="#444" font-family="Liberation Sans, sans-serif">2</text>
<text x="1290" y="386" font-size="11.5" fill="#444" font-family="Liberation Sans, sans-serif">3</text>
<rect x="1314.800" y="251.800" width="52.500" height="48.500" fill="#fff" stroke="#d4d4d4" stroke-width="1"/>
<ellipse cx="1341.100" cy="276.400" rx="12.800" ry="17.400" fill="none" stroke="#a20e2c" stroke-width="7.800"/>
<clipPath id="tb0"><rect x="1316" y="305.6" width="49" height="45.500"/></clipPath>
<rect x="1316.400" y="305.70000000000005" width="48.500" height="45" fill="#fff" stroke="#000" stroke-width="4.200"/>
<ellipse clip-path="url(#tb0)" cx="1341.500" cy="328.8" rx="15.800" ry="20.300" fill="#fff" stroke="#000" stroke-width="2.600"/>
<clipPath id="tb1"><rect x="1316" y="358.2" width="49" height="45.500"/></clipPath>
<rect x="1316.400" y="358.3" width="48.500" height="45" fill="#fff" stroke="#000" stroke-width="4.200"/>
<ellipse clip-path="url(#tb1)" cx="1341.500" cy="381.4" rx="15.800" ry="20.300" fill="#fff" stroke="#000" stroke-width="2.600"/>
<defs><linearGradient id="yg" x1="0" y1="1" x2="1" y2="0"><stop offset="0" stop-color="#eef04e" stop-opacity="0.62"/><stop offset="0.55" stop-color="#eef04e" stop-opacity="0.45"/><stop offset="1" stop-color="#eef04e" stop-opacity="0.12"/></linearGradient></defs>
<circle cx="1296.500" cy="345.200" r="25" fill="none" stroke="url(#yg)" stroke-width="14"/>
<g fill="#333"><path d="M1284 888h21v3h-21z M1294.5 891 L1304 908 H1285Z"/><path d="M1324 890 L1334.5 909 H1313.5Z"/></g>
<g fill="#8a8a8a"><path d="M1354 909 L1343.5 890 H1364.5Z"/><path d="M1373 906h21v3h-21z M1383.5 906 L1374 889 H1393Z"/></g>
<text x="1409.500" y="899.300" font-size="13" fill="#2a2a2a" font-family="Liberation Sans, sans-serif" letter-spacing="-0.300">123</text>
<path d="M1421 902 L1431 911 L1427 905.5Z M1421 902l5 1.2-3.6 3.4z" fill="#d6314a" stroke="#d6314a" stroke-width="1.5"/>
<g fill="#c9c9c9"><rect x="1439" y="889" width="5" height="5"/><rect x="1439" y="897" width="5" height="5"/><rect x="1439" y="905" width="5" height="5"/><path d="M1447 889l5 0-2.5 4z M1448 899 l9 9 -1 -5z"/></g>
</svg>
<div class="a" style="left:1480px;top:152px;width:274px;height:764px;background:#efefef"></div>
<div class="t" style="left:1488px;top:161px;font-size:13px;letter-spacing:.2px;font-weight:bold;color:#3a3a3a">Object Properties</div>
<svg style="left:1734px;top:162px" width="11" height="10"><path d="M1 1.5 L6 5 L1 8.5 L3.5 5Z M5 1.5 L10 5 L5 8.5 L7.5 5Z" fill="#333"/></svg>
<div class="a" style="left:1488px;top:189px;width:52px;height:24px;background:#cfe0f3"></div>
<div class="t" style="left:1493px;top:195px;font-size:11.5px;color:#5a7a9a">Outline</div>
<div class="t" style="left:1547px;top:195px;font-size:11.5px;color:#666">Effects</div>
<div class="t" style="left:1597px;top:195px;font-size:11.5px;color:#666">Stitching</div>
<div class="a" style="left:1540px;top:190px;width:1.5px;height:22px;background:#8a8a8a"></div>
<div class="a" style="left:1588px;top:190px;width:1.5px;height:22px;background:#8a8a8a"></div>
<div class="a" style="left:1648px;top:190px;width:1.5px;height:22px;background:#8a8a8a"></div>
<div class="a" style="left:1487px;top:212px;width:261px;height:700px;background:#f1f1f1;border:1px solid #c9d3de;border-right:2px solid #8a8a8a;border-bottom:2px solid #8a8a8a"></div>
<div class="t" style="left:1497px;top:227px;font-size:10.8px;font-weight:bold;color:#222;font-family:'DejaVu Sans',sans-serif">Stitch type</div>
<div class="a" style="left:1733px;top:234px;width:5px;height:574px;background:#777"></div>
<div class="a" style="left:1497px;top:254px;width:226px;height:383px;background:#ececec;border:1px solid #e0e0e0"></div>
<div class="a" style="left:1718px;top:258px;width:4px;height:375px;background:#f4f4f4"></div>
<div class="a" style="left:1582px;top:386px;width:80px;height:123px;background:#e8e9ea;border:2.5px solid #b8c6d4"></div>
<div class="t c" style="left:1540px;top:350px;font-size:13.3px;color:#666">Backstitch</div>
<div class="t c" style="left:1621px;top:350px;font-size:13.3px;color:#666">Stemstitch</div>
<div class="t c" style="left:1540px;top:475px;font-size:13.3px;color:#666">Zigzag</div>
<div class="t c" style="left:1621px;top:475px;font-size:13.3px;color:#666">Satin</div>
<div class="t c" style="left:1540px;top:600px;font-size:13.3px;color:#666">Raised Satin</div>
<div class="t c" style="left:1621px;top:600px;font-size:13.3px;color:#666">Blanket</div>
<div class="a" style="left:1617px;top:451.5px;width:42px;height:20.500px;background:rgba(250,250,250,.8);border-bottom:1px solid #c8c8c8;border-right:1px solid #d0d0d0;z-index:3"></div>
<div class="t" style="left:1620px;top:453.500px;font-size:13px;color:#b8b8b8;z-index:4">Satin</div>
<div class="t" style="left:1497px;top:654px;font-size:10.8px;font-weight:bold;color:#222;font-family:'DejaVu Sans',sans-serif">Stitch settings</div>
<div class="t" style="left:1512px;top:682px;font-size:11px;letter-spacing:.35px;color:#444">Length:</div>
<div class="t" style="left:1512px;top:745px;font-size:11px;letter-spacing:.35px;color:#444">Min length:</div>
<div class="t" style="left:1530px;top:715px;font-size:11px;letter-spacing:.35px;color:#444">Variable run length</div>
<div class="fld" style="left:1598px;top:678px;width:54px;height:21px;padding:5px 0 0 5px">2.50</div>
<div class="a" style="left:1652px;top:677px;width:18px;height:22px;background:#e4e4e4;border:1px solid #d4d4d4"></div>
<svg style="left:1657px;top:680px" width="8" height="16"><path d="M1 5L4 1L7 5Z M1 10L4 14L7 10Z" fill="#444"/></svg>
<div class="t" style="left:1675px;top:683px;font-size:11px;color:#444">mm</div>
<div class="fld" style="left:1598px;top:741px;width:54px;height:21px;padding:5px 0 0 5px">1.25</div>
<div class="a" style="left:1652px;top:740px;width:18px;height:22px;background:#e4e4e4;border:1px solid #d4d4d4"></div>
<svg style="left:1657px;top:743px" width="8" height="16"><path d="M1 5L4 1L7 5Z M1 10L4 14L7 10Z" fill="#444"/></svg>
<div class="t" style="left:1675px;top:746px;font-size:11px;color:#444">mm</div>
<div class="a" style="left:1512px;top:713px;width:14px;height:14px;background:#1f6fc4;border-radius:2px"></div>
<svg style="left:1512px;top:713px" width="14" height="14"><path d="M3.5 7.2L6 9.7L10.8 4.5" fill="none" stroke="#fff" stroke-width="1.4"/></svg>
<svg style="left:0;top:0" width="1780" height="1001" viewBox="0 0 1780 1001">
<path d="M1505 269.500L1577 339.500" stroke="#a4e8dc" stroke-width="3.200"/><path d="M1505 269.500L1577 339.500" stroke="#2d7268" stroke-width="1.700" stroke-dasharray="3.600 3.400"/>
<ellipse cx="1590.5" cy="275.0" rx="3.400" ry="1.400" transform="rotate(-35 1590.5 275.0)" fill="#b4efe4" stroke="#3fa394" stroke-width="0.900"/>
<ellipse cx="1595.2" cy="279.1" rx="3.400" ry="1.400" transform="rotate(-35 1595.2 279.1)" fill="#b4efe4" stroke="#3fa394" stroke-width="0.900"/>
<ellipse cx="1600.0" cy="283.3" rx="3.400" ry="1.400" transform="rotate(-35 1600.0 283.3)" fill="#b4efe4" stroke="#3fa394" stroke-width="0.900"/>
<ellipse cx="1604.8" cy="287.4" rx="3.400" ry="1.400" transform="rotate(-35 1604.8 287.4)" fill="#b4efe4" stroke="#3fa394" stroke-width="0.900"/>
<ellipse cx="1609.5" cy="291.6" rx="3.400" ry="1.400" transform="rotate(-35 1609.5 291.6)" fill="#b4efe4" stroke="#3fa394" stroke-width="0.900"/>
<ellipse cx="1614.2" cy="295.8" rx="3.400" ry="1.400" transform="rotate(-35 1614.2 295.8)" fill="#b4efe4" stroke="#3fa394" stroke-width="0.900"/>
<ellipse cx="1619.0" cy="299.9" rx="3.400" ry="1.400" transform="rotate(-35 1619.0 299.9)" fill="#b4efe4" stroke="#3fa394" stroke-width="0.900"/>
<ellipse cx="1623.8" cy="304.1" rx="3.400" ry="1.400" transform="rotate(-35 1623.8 304.1)" fill="#b4efe4" stroke="#3fa394" stroke-width="0.900"/>
<ellipse cx="1628.5" cy="308.2" rx="3.400" ry="1.400" transform="rotate(-35 1628.5 308.2)" fill="#b4efe4" stroke="#3fa394" stroke-width="0.900"/>
<ellipse cx="1633.2" cy="312.4" rx="3.400" ry="1.400" transform="rotate(-35 1633.2 312.4)" fill="#b4efe4" stroke="#3fa394" stroke-width="0.900"/>
<ellipse cx="1638.0" cy="316.5" rx="3.400" ry="1.400" transform="rotate(-35 1638.0 316.5)" fill="#b4efe4" stroke="#3fa394" stroke-width="0.900"/>
<ellipse cx="1642.8" cy="320.6" rx="3.400" ry="1.400" transform="rotate(-35 1642.8 320.6)" fill="#b4efe4" stroke="#3fa394" stroke-width="0.900"/>
<ellipse cx="1647.5" cy="324.8" rx="3.400" ry="1.400" transform="rotate(-35 1647.5 324.8)" fill="#b4efe4" stroke="#3fa394" stroke-width="0.900"/>
<ellipse cx="1652.2" cy="328.9" rx="3.400" ry="1.400" transform="rotate(-35 1652.2 328.9)" fill="#b4efe4" stroke="#3fa394" stroke-width="0.900"/>
<ellipse cx="1657.0" cy="333.1" rx="3.400" ry="1.400" transform="rotate(-35 1657.0 333.1)" fill="#b4efe4" stroke="#3fa394" stroke-width="0.900"/>
<path d="M1508 396L1576 460" stroke="#c4f0e8" stroke-width="7"/><path d="M1505.5 398.5 L1513.1 395.9 L1510.7 403.4 L1518.4 400.9 L1515.9 408.4 L1523.6 405.8 L1521.2 413.3 L1528.8 410.7 L1526.4 418.2 L1534.1 415.6 L1531.6 423.1 L1539.3 420.6 L1536.9 428.1 L1544.5 425.5 L1542.1 433.0 L1549.8 430.4 L1547.3 437.9 L1555.0 435.3 L1552.6 442.8 L1560.2 440.2 L1557.8 447.8 L1565.4 445.2 L1563.0 452.7 L1570.7 450.1 L1568.2 457.6 L1575.9 455.0 L1573.5 462.5" stroke="#5aa294" stroke-width="1.100" fill="none"/>
<path d="M1589 396L1655 457" stroke="#3fc4ae" stroke-width="7.500"/><path d="M1590.500 394.500L1656.500 455.500" stroke="#1f8372" stroke-width="3"/>
<path d="M1508 521L1573 585" stroke="#3db5a4" stroke-width="7"/><path d="M1508 521L1573 585" stroke="#2a9080" stroke-width="1.6"/>
<path d="M1588 521L1658 582 M1591.0 523.6l4.5 -4.5 M1597.6 529.4l4.5 -4.5 M1604.2 535.1l4.5 -4.5 M1610.8 540.9l4.5 -4.5 M1617.4 546.6l4.5 -4.5 M1624.0 552.4l4.5 -4.5 M1630.6 558.1l4.5 -4.5 M1637.2 563.9l4.5 -4.5 M1643.8 569.6l4.5 -4.5 M1650.4 575.4l4.5 -4.5 M1657.0 581.1l4.5 -4.5" stroke="#3db5a4" stroke-width="1.2" fill="none"/>
</svg>
<div class="a" style="left:1754px;top:150px;width:26px;height:770px;background:#f0f0f0"></div>
<div class="a" style="left:1757px;top:152px;width:20px;height:82px;background:#d9e6f4;border:1px solid #c3d3e5;border-right:none"></div>
<div class="t" style="left:1774.500px;top:183px;font-size:13px;letter-spacing:-0.33px;color:#3f4f66;transform-origin:0 0;transform:rotate(90deg)">Threads</div>
<div class="a" style="left:1757px;top:251px;width:20px;height:203px;background:#d9e6f4;border:1px solid #c3d3e5;border-right:none"></div>
<div class="t" style="left:1774.500px;top:281px;font-size:13px;letter-spacing:-0.08px;color:#3f4f66;transform-origin:0 0;transform:rotate(90deg)">Keyboard Design Collection</div>
<div class="a" style="left:1757px;top:469px;width:20px;height:60px;background:#d9e6f4;border:1px solid #c3d3e5;border-right:none"></div>
<div class="t" style="left:1774.500px;top:493px;font-size:13px;letter-spacing:0.35px;color:#3f4f66;transform-origin:0 0;transform:rotate(90deg)">Hints</div>
<div class="a" style="left:1757px;top:546px;width:20px;height:135px;background:#d9e6f4;border:1px solid #c3d3e5;border-right:none"></div>
<div class="t" style="left:1774.500px;top:572px;font-size:13px;letter-spacing:0.41px;color:#3f4f66;transform-origin:0 0;transform:rotate(90deg)">Design Overview</div>
<div class="a" style="left:1757px;top:693px;width:20px;height:162px;background:#d9e6f4;border:1px solid #c3d3e5;border-right:none"></div>
<div class="t" style="left:1774.500px;top:722px;font-size:13px;letter-spacing:1.1px;color:#3f4f66;transform-origin:0 0;transform:rotate(90deg)">Design Information</div>
<div class="a" style="left:1776.500px;top:33px;width:2px;height:945px;background:#2b3b5c"></div>
<div class="a" style="left:1778.500px;top:33px;width:1.500px;height:945px;background:#e6ecf2"></div>
<svg style="left:0;top:0" width="1780" height="1001" viewBox="0 0 1780 1001">
<rect x="1761" y="161.500" width="12" height="15" fill="#4cc0b0"/><path d="M1758.500 160.500h17M1758.500 177.500h17" stroke="#8a7a4a" stroke-width="2.600"/><path d="M1761.500 162v14M1772.500 162v14" stroke="#3a8a80" stroke-width="1"/>
<path d="M1760 277l6-17 6 17h-3.500l-1-3.500h-3.500l-1 3.500z" fill="#c83a3a"/><circle cx="1766" cy="260" r="3.600" fill="#f2c430" stroke="#b08a1a" stroke-width="0.800"/><path d="M1763.500 263l-1.500 5M1768.500 263l1.500 5" stroke="#d05a2a" stroke-width="1.600"/>
<circle cx="1766" cy="480" r="5.500" fill="#f4c64a" stroke="#7a6a3a" stroke-width="1"/><rect x="1763.500" y="485" width="5" height="4.500" fill="#777"/><path d="M1757.500 474l2.500 2M1774.500 474l-2.500 2M1766 470v2.500M1757 481h2.500M1775 481h-2.500" stroke="#c8a84a" stroke-width="1"/>
<rect x="1759.500" y="553.500" width="14" height="14" fill="#fafafa" stroke="#3a4a7a" stroke-width="1.200"/><rect x="1759.500" y="553.500" width="14" height="3" fill="#2a3a7a"/><path d="M1762 565l4-5 3 2 3-3v6z" fill="#d05a5a"/><rect x="1762" y="558.500" width="4" height="3" fill="#5aa06a"/>
<circle cx="1766" cy="708.500" r="8.800" fill="#eef4fa" stroke="#555" stroke-width="1.300"/><path d="M1757.500 708.500h17" stroke="#555" stroke-width="1.200"/><path d="M1766 704v9" stroke="#555" stroke-width="1.200"/>
</svg>
<div class="a" style="left:0;top:916px;width:1780px;height:62px;background:#f0f0f0"></div>
<div class="a" style="left:12px;top:929px;width:37px;height:36px;background:#16609f"></div>
<div class="t c" style="left:30.5px;top:940px;font-size:14px;color:#b4d8f8">2</div>
<div class="t c" style="left:84px;top:958px;font-size:13.5px;color:#555">Pick</div>
<div class="t c" style="left:136px;top:958px;font-size:13.5px;color:#555">Apply</div>
<div class="t c" style="left:1499px;top:958px;font-size:13.5px;color:#555">Add</div>
<div class="t c" style="left:1557px;top:958px;font-size:13.5px;color:#555">Remove</div>
<div class="t c" style="left:1622px;top:958px;font-size:13.5px;color:#555">Hide</div>
<div class="t c" style="left:1678px;top:958px;font-size:13.5px;color:#555">Discard</div>
<div class="t c" style="left:1744px;top:958px;font-size:13.5px;color:#555">Threads</div>
<div class="a" style="left:175.3px;top:931px;width:31px;height:31px;background:#a3122b"></div>
<div class="a" style="left:197.3px;top:930px;width:9px;height:9px;background:#1a1ae0;border-left:1px solid #fff;border-bottom:1px solid #fff"></div>
<div class="t c" style="left:190.8px;top:940.5px;font-size:13.3px;color:#f4f4f4">1</div>
<div class="a" style="left:214.1px;top:931px;width:31px;height:31px;background:#16609f"></div>
<div class="t c" style="left:229.6px;top:940.5px;font-size:13.3px;color:#f4f4f4">2</div>
<div class="a" style="left:252.9px;top:931px;width:31px;height:31px;background:#2eb44b"></div>
<div class="t c" style="left:268.4px;top:940.5px;font-size:13.3px;color:#f4f4f4">3</div>
<div class="a" style="left:291.7px;top:931px;width:31px;height:31px;background:#ffff33"></div>
<div class="t c" style="left:307.2px;top:940.5px;font-size:13.3px;color:#3a3a30">4</div>
<div class="a" style="left:330.5px;top:931px;width:31px;height:31px;background:#8ec6f2"></div>
<div class="t c" style="left:346.0px;top:940.5px;font-size:13.3px;color:#3a4a5a">5</div>
<div class="a" style="left:369.3px;top:931px;width:31px;height:31px;background:#e9a0c9"></div>
<div class="t c" style="left:384.8px;top:940.5px;font-size:13.3px;color:#f4f4f4">6</div>
<div class="a" style="left:408.1px;top:931px;width:31px;height:31px;background:#452a7d"></div>
<div class="t c" style="left:423.6px;top:940.5px;font-size:13.3px;color:#f4f4f4">7</div>
<div class="a" style="left:446.9px;top:931px;width:31px;height:31px;background:#7b4b2d"></div>
<div class="t c" style="left:462.4px;top:940.5px;font-size:13.3px;color:#f4f4f4">8</div>
<div class="a" style="left:485.7px;top:931px;width:31px;height:31px;background:#9b9b9b"></div>
<div class="t c" style="left:501.2px;top:940.5px;font-size:13.3px;color:#f4f4f4">9</div>
<div class="a" style="left:524.5px;top:931px;width:31px;height:31px;background:#f1f1f9"></div>
<div class="t c" style="left:540.0px;top:940.5px;font-size:13.3px;color:#3a3a30">10</div>
<div class="a" style="left:560.3px;top:928px;width:37px;height:37px;background:#000"></div>
<div class="a" style="left:565.3px;top:933px;width:27px;height:27px;border:2px solid #fff"></div>
<div class="a" style="left:587.3px;top:929px;width:9px;height:9px;background:#1a1ae0"></div>
<div class="t c" style="left:578.8px;top:940.5px;font-size:13.3px;color:#f4f4f4">11</div>
<div class="a" style="left:602.1px;top:931px;width:31px;height:31px;background:#f6c71a"></div>
<div class="t c" style="left:617.6px;top:940.5px;font-size:13.3px;color:#3a3a30">12</div>
<div class="a" style="left:640.9px;top:931px;width:31px;height:31px;background:#f8f8f1"></div>
<div class="t c" style="left:656.4px;top:940.5px;font-size:13.3px;color:#3a3a30">13</div>
<div class="a" style="left:679.7px;top:931px;width:31px;height:31px;background:#fbefee"></div>
<div class="t c" style="left:695.2px;top:940.5px;font-size:13.3px;color:#3a3a30">14</div>
<div class="a" style="left:718.5px;top:931px;width:31px;height:31px;background:#e3671b"></div>
<div class="t c" style="left:734.0px;top:940.5px;font-size:13.3px;color:#f4f4f4">15</div>
<div class="a" style="left:757.3px;top:931px;width:31px;height:31px;background:#a9f182"></div>
<div class="t c" style="left:772.8px;top:940.5px;font-size:13.3px;color:#3a3a30">16</div>
<div class="a" style="left:796.1px;top:931px;width:31px;height:31px;background:#a14c6d"></div>
<div class="t c" style="left:811.6px;top:940.5px;font-size:13.3px;color:#f4f4f4">17</div>
<div class="a" style="left:834.9px;top:931px;width:31px;height:31px;background:#17519b"></div>
<div class="t c" style="left:850.4px;top:940.5px;font-size:13.3px;color:#f4f4f4">18</div>
<div class="a" style="left:873.7px;top:931px;width:31px;height:31px;background:#b1d1e9"></div>
<div class="t c" style="left:889.2px;top:940.5px;font-size:13.3px;color:#3a4a5a">19</div>
<div class="a" style="left:912.5px;top:931px;width:31px;height:31px;background:#f19181"></div>
<div class="t c" style="left:928.0px;top:940.5px;font-size:13.3px;color:#f4f4f4">20</div>
<div class="a" style="left:951.3px;top:931px;width:31px;height:31px;background:#6ba950"></div>
<div class="t c" style="left:966.8px;top:940.5px;font-size:13.3px;color:#f4f4f4">21</div>
<div class="a" style="left:990.1px;top:931px;width:31px;height:31px;background:#3b7b2b"></div>
<div class="t c" style="left:1005.6px;top:940.5px;font-size:13.3px;color:#f4f4f4">22</div>
<div class="a" style="left:1028.9px;top:931px;width:31px;height:31px;background:#d979a1"></div>
<div class="t c" style="left:1044.4px;top:940.5px;font-size:13.3px;color:#f4f4f4">23</div>
<div class="a" style="left:1067.7px;top:931px;width:31px;height:31px;background:#f9d161"></div>
<div class="t c" style="left:1083.2px;top:940.5px;font-size:13.3px;color:#3a3a30">24</div>
<div class="a" style="left:1106.5px;top:931px;width:31px;height:31px;background:#5b4131"></div>
<div class="t c" style="left:1122.0px;top:940.5px;font-size:13.3px;color:#f4f4f4">25</div>
<div class="a" style="left:1145.3px;top:931px;width:31px;height:31px;background:#19b1c1"></div>
<div class="t c" style="left:1160.8px;top:940.5px;font-size:13.3px;color:#f4f4f4">26</div>
<div class="a" style="left:1184.1px;top:931px;width:31px;height:31px;background:#811931"></div>
<div class="t c" style="left:1199.6px;top:940.5px;font-size:13.3px;color:#f4f4f4">27</div>
<div class="a" style="left:1222.9px;top:931px;width:31px;height:31px;background:#2141a1"></div>
<div class="t c" style="left:1238.4px;top:940.5px;font-size:13.3px;color:#f4f4f4">28</div>
<div class="a" style="left:1261.7px;top:931px;width:31px;height:31px;background:#414951"></div>
<div class="t c" style="left:1277.2px;top:940.5px;font-size:13.3px;color:#f4f4f4">29</div>
<div class="a" style="left:1300.5px;top:931px;width:31px;height:31px;background:#196131"></div>
<div class="t c" style="left:1316.0px;top:940.5px;font-size:13.3px;color:#f4f4f4">30</div>
<div class="a" style="left:1339.3px;top:931px;width:31px;height:31px;background:#91c931"></div>
<div class="t c" style="left:1354.8px;top:940.5px;font-size:13.3px;color:#f4f4f4">31</div>
<div class="a" style="left:1378.1px;top:931px;width:31px;height:31px;background:#d11929"></div>
<div class="t c" style="left:1393.6px;top:940.5px;font-size:13.3px;color:#f4f4f4">32</div>
<div class="a" style="left:1446px;top:928px;width:18px;height:38px;background:#fff;border:1px solid #ddd"></div>
<svg style="left:1450px;top:934px" width="10" height="26"><path d="M1 6L5 1L9 6Z M1 20L5 25L9 20Z" fill="#666"/></svg>
<svg style="left:0;top:0" width="1780" height="1001" viewBox="0 0 1780 1001">
<path d="M70 953.500l3-5.500 14.500-14.500 3.500 3.500-14.500 14.500z" fill="#2f9a8a" stroke="#1f6a60" stroke-width="0.800"/><path d="M86 934l-1.500-2.500 2.500-2.500 2 1 3-3.500c1.500-1.500 5 1 3.500 3.500l-3 3.500 1 2-2.500 2.500-2.500-1.500z" fill="#f0d070" stroke="#a08a3a" stroke-width="0.900"/>
<path d="M140.500 931.500l11.500 11-11.500 11-11.500-11z" fill="#f3bd55" stroke="#8a6a2a" stroke-width="1.200" stroke-linejoin="round"/><path d="M124 951c-1-7 1-13 6-15l3 4c-4 1-7 5-9 11z" fill="#2f9a8a"/><path d="M141.500 925.500l-4.500 14.500" stroke="#222" stroke-width="1.800"/><circle cx="136.800" cy="940.500" r="2.300" fill="#3a2a1a"/>
<path d="M1485 938.500h28M1499 924.500v28" stroke="#3a3a3a" stroke-width="5.200"/><path d="M1543 938.500h27.500" stroke="#3a3a3a" stroke-width="5.200"/>
<path d="M1593.500 926v40M1710.500 926v40" stroke="#e2e2e2" stroke-width="1"/>
<rect x="1608.500" y="931" width="8" height="18.500" fill="#5ab8b2"/><rect x="1618.500" y="931" width="10.500" height="18.500" fill="#e8a84a"/><path d="M1618.500 935l10.500 7M1618.500 939l10.500 7M1618.500 943l9 6M1621 931l8 5.500M1618.500 947l4 2.500" stroke="#8a5a1a" stroke-width="0.900"/><rect x="1630.500" y="931" width="8" height="18.500" fill="#d8566a"/><rect x="1612" y="929.500" width="2.500" height="2.500" fill="#1a1ad0"/><rect x="1634" y="929.500" width="2.500" height="2.500" fill="#1a1ad0"/>
<rect x="1663.500" y="931" width="8" height="18.500" fill="#5ab8b2"/><rect x="1673.500" y="931" width="10.500" height="18.500" fill="#f2c088"/><path d="M1674 931.500l9.500 17.500M1683.500 931.500l-9.500 17.500" stroke="#7a4a1a" stroke-width="1.300"/><rect x="1685.500" y="931" width="8" height="18.500" fill="#d8566a"/><rect x="1667" y="929.500" width="2.500" height="2.500" fill="#1a1ad0"/><rect x="1689" y="929.500" width="2.500" height="2.500" fill="#1a1ad0"/>
<rect x="1735" y="929" width="18.500" height="20.500" fill="#52b8b0" stroke="#3a8a84" stroke-width="1"/><rect x="1731.500" y="925.500" width="25.500" height="4.500" rx="1.500" fill="#ecd49a" stroke="#8a7a4a" stroke-width="1"/><rect x="1731.500" y="948.500" width="25.500" height="4.500" rx="1.500" fill="#ecd49a" stroke="#8a7a4a" stroke-width="1"/>
</svg>
<div class="a" style="left:0;top:973px;width:1780px;height:4px;background:#f8f9fa"></div>
<div class="a" style="left:0;top:976.5px;width:1780px;height:25px;background:linear-gradient(#2c759c,#2d6e95)"></div>
<div class="t" style="left:860px;top:983px;font-size:14px;letter-spacing:-.4px;color:#c4e4f8">W&nbsp; 75.3 H 101.3</div>
<div class="t" style="left:1302px;top:983px;font-size:14px;letter-spacing:-.4px;color:#c4e4f8">7,593</div>
<div class="t" style="left:1378px;top:983px;font-size:14px;letter-spacing:-.4px;color:#c4e4f8">Pure Cotton</div>
<div class="t" style="left:1614px;top:983px;font-size:14px;letter-spacing:-.4px;color:#c4e4f8">EMB Grade: A</div>
<svg style="left:1702px;top:982px" width="14" height="13"><path d="M7 12 L1 5 A3.2 3.2 0 0 1 7 2.5 A3.2 3.2 0 0 1 13 5 Z" fill="#e8121e"/></svg>
</body></html>
